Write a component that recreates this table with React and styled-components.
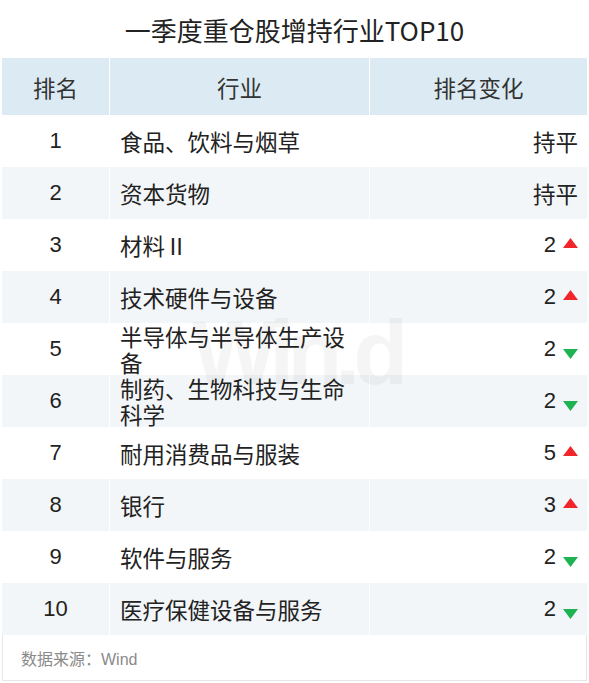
import styled, { createGlobalStyle } from "styled-components";

const GlobalStyle = createGlobalStyle`
  body {
    margin: 0;
    background: #ffffff;
    font-family: "Liberation Sans", "Noto Sans CJK SC", sans-serif;
  }
`;

const Page = styled.div`
  width: 589px;
  height: 683px;
  box-sizing: border-box;
  padding: 0 2px;
  overflow: hidden;
`;

const Title = styled.h1`
  margin: 0;
  height: 58px;
  line-height: 60px;
  text-align: center;
  font-family: "Noto Sans CJK SC", sans-serif;
  font-size: 26px;
  font-weight: 400;
  color: #222222;
`;

const Table = styled.div`
  position: relative;
`;

const Row = styled.div`
  display: grid;
  grid-template-columns: 107px 259px 1fr;
  column-gap: 1px;
  height: ${(p) => (p.$head ? 57 : 52)}px;
  background: ${(p) =>
    p.$head ? "#dcebf3" : p.$alt ? "#f3f6f8" : "#ffffff"};
`;

const Cell = styled.div`
  display: flex;
  align-items: center;
  justify-content: ${(p) =>
    p.$align === "right" ? "flex-end" : p.$align === "left" ? "flex-start" : "center"};
  padding: ${(p) =>
    p.$align === "right" ? "0 9px 0 0" : p.$align === "left" ? "0 14px 0 10px" : "0"};
  font-size: 22px;
  color: ${(p) => (p.$head ? "#333333" : "#222222")};
  box-shadow: ${(p) => (p.$first ? "none" : "-1px 0 0 #ffffff")};
`;

const Name = styled.span`
  line-height: 26px;
  font-size: 22.5px;
  font-family: "Noto Sans CJK SC", sans-serif;
`;

const Change = styled.span`
  display: flex;
  align-items: center;
  gap: 7px;
`;

const Arrow = styled.svg`
  width: 15px;
  height: 10px;
  margin-top: ${(p) => (p.$up ? "-4px" : "9px")};
`;

const Watermark = styled.div`
  position: absolute;
  left: 190px;
  top: 244px;
  font-family: "Liberation Sans", sans-serif;
  font-size: 90px;
  font-weight: 700;
  letter-spacing: -7px;
  color: rgba(0, 0, 0, 0.04);
  pointer-events: none;
`;

const Footer = styled.div`
  height: 45px;
  display: flex;
  align-items: center;
  padding-left: 18px;
  border: 1px solid #e6e6e6;
  border-top: none;
  font-size: 16px;
  color: #8a8a8a;
`;

const rows = [
  { rank: 1, name: "食品、饮料与烟草", change: "持平" },
  { rank: 2, name: "资本货物", change: "持平" },
  { rank: 3, name: "材料Ⅱ", change: 2, dir: "up" },
  { rank: 4, name: "技术硬件与设备", change: 2, dir: "up" },
  { rank: 5, name: "半导体与半导体生产设备", change: 2, dir: "down" },
  { rank: 6, name: "制药、生物科技与生命科学", change: 2, dir: "down" },
  { rank: 7, name: "耐用消费品与服装", change: 5, dir: "up" },
  { rank: 8, name: "银行", change: 3, dir: "up" },
  { rank: 9, name: "软件与服务", change: 2, dir: "down" },
  { rank: 10, name: "医疗保健设备与服务", change: 2, dir: "down" },
];

const Trend = ({ dir }) => (
  <Arrow $up={dir === "up"} viewBox="0 0 15 10">
    {dir === "up" ? (
      <polygon points="7.5,0 15,10 0,10" fill="#f0262b" />
    ) : (
      <polygon points="0,0 15,0 7.5,10" fill="#1db352" />
    )}
  </Arrow>
);

export default function App() {
  return (
    <Page>
      <GlobalStyle />
      <Title>一季度重仓股增持行业TOP10</Title>
      <Table>
        <Row $head>
          <Cell $head $first>
            <Name>排名</Name>
          </Cell>
          <Cell $head>
            <Name>行业</Name>
          </Cell>
          <Cell $head>
            <Name>排名变化</Name>
          </Cell>
        </Row>
        {rows.map((r, i) => (
          <Row key={r.rank} $alt={i % 2 === 1}>
            <Cell $first>{r.rank}</Cell>
            <Cell $align="left">
              <Name>{r.name}</Name>
            </Cell>
            <Cell $align="right">
              {r.dir ? (
                <Change>
                  {r.change}
                  <Trend dir={r.dir} />
                </Change>
              ) : (
                <Name>{r.change}</Name>
              )}
            </Cell>
          </Row>
        ))}
        <Watermark>Win.d</Watermark>
      </Table>
      <Footer>数据来源：Wind</Footer>
    </Page>
  );
}
